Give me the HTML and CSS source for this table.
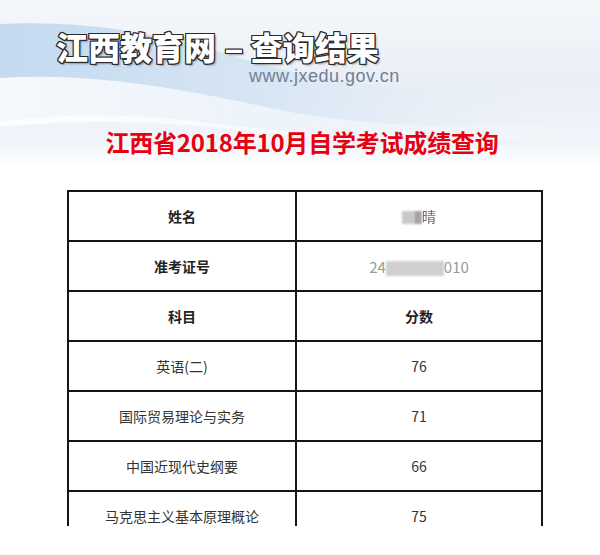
FILE: index.html
```html
<!DOCTYPE html>
<html lang="zh-CN">
<head>
<meta charset="utf-8">
<title>江西教育网 - 查询结果</title>
<link rel="stylesheet" href="styles.css">
</head>
<body>
<div class="page">
  <header class="banner">
    <svg class="banner-bg" width="600" height="180" viewBox="0 0 600 180" preserveAspectRatio="none" aria-hidden="true">
      <defs>
        <linearGradient id="sky" x1="0" y1="0" x2="0" y2="1">
          <stop offset="0" stop-color="#f5f7fa"/>
          <stop offset="0.45" stop-color="#eaeff6"/>
          <stop offset="0.8" stop-color="#f2f5fa"/>
          <stop offset="0.92" stop-color="#ffffff"/>
        </linearGradient>
        <linearGradient id="wave1" x1="0" y1="0" x2="1" y2="0">
          <stop offset="0" stop-color="#c3daf0"/>
          <stop offset="0.45" stop-color="#d8e6f4"/>
          <stop offset="1" stop-color="#eef2f8" stop-opacity="0"/>
        </linearGradient>
        <linearGradient id="wave2" x1="0" y1="0" x2="1" y2="0">
          <stop offset="0" stop-color="#ffffff" stop-opacity="0.85"/>
          <stop offset="0.6" stop-color="#ffffff" stop-opacity="0.45"/>
          <stop offset="1" stop-color="#ffffff" stop-opacity="0"/>
        </linearGradient>
      </defs>
      <rect width="600" height="180" fill="url(#sky)"/>
      <path d="M0 24 C80 20 160 32 240 58 C330 84 420 98 600 84 L600 150 C420 140 300 135 200 122 C120 112 60 114 0 122 Z" fill="url(#wave1)"/>
      <path d="M0 78 C90 72 180 88 270 108 C360 128 470 130 600 120 L600 136 C460 146 340 141 240 130 C150 120 70 120 0 127 Z" fill="url(#wave2)"/>
    </svg>
    <div class="brand">
      <div class="brand-name">江西教育网<span class="dash">–</span>查询结果</div>
      <div class="brand-url">www.jxedu.gov.cn</div>
    </div>
    <h1 class="exam-title">江西省2018年10月自学考试成绩查询</h1>
  </header>

  <div class="table-wrap">
    <table class="scores">
      <tr>
        <th>姓名</th>
        <td class="masked"><span class="blot w12"></span><span class="blot w10 dark"></span><span class="blur-char">晴</span></td>
      </tr>
      <tr>
        <th>准考证号</th>
        <td class="masked id">24<span class="blot w60"></span>010</td>
      </tr>
      <tr>
        <th>科目</th>
        <th>分数</th>
      </tr>
      <tr><td>英语(二)</td><td>76</td></tr>
      <tr><td>国际贸易理论与实务</td><td>71</td></tr>
      <tr><td>中国近现代史纲要</td><td>66</td></tr>
      <tr><td>马克思主义基本原理概论</td><td>75</td></tr>
    </table>
  </div>
</div>
</body>
</html>
```

FILE: styles.css
```css
* { box-sizing: border-box; }

html, body {
  margin: 0;
  padding: 0;
  background: #ffffff;
}

body {
  font-family: "Noto Sans CJK SC", "Microsoft YaHei", sans-serif;
  color: #333333;
}

.page {
  width: 600px;
  height: 555px;
  overflow: hidden;
}

.banner {
  position: relative;
  height: 178px;
  display: flex;
  flex-direction: column;
}

.banner-bg {
  position: absolute;
  left: 0;
  top: 0;
  width: 600px;
  height: 180px;
  z-index: 0;
}

.brand {
  position: relative;
  z-index: 1;
  padding: 28px 0 0 56px;
}

.brand-name {
  font-family: "Noto Sans CJK SC", sans-serif;
  font-weight: 900;
  font-size: 32px;
  line-height: 36px;
  letter-spacing: 0;
  color: #ffffff;
  -webkit-text-stroke: 2px #333333;
  paint-order: stroke fill;
  text-shadow:
    1px 1px 0 #2a2a2a,
    -1px 1px 0 #2a2a2a,
    1px -1px 0 #2a2a2a,
    -1px -1px 0 #2a2a2a,
    2px 2px 2px rgba(0,0,0,0.35);
}

.brand-name .dash {
  display: inline-block;
  margin: 0 8px 0 9px;
  font-family: "Liberation Sans", Arial, sans-serif;
  font-weight: 700;
}

.brand-url {
  margin: 0 0 0 193px;
  font-family: "Liberation Sans", Arial, sans-serif;
  font-size: 18px;
  line-height: 18px;
  color: #6f8097;
  letter-spacing: 0.5px;
}

.exam-title {
  position: relative;
  z-index: 1;
  margin: 42px 0 0 0;
  text-align: center;
  font-family: "Noto Sans CJK SC", sans-serif;
  font-weight: 700;
  font-size: 24px;
  line-height: 30px;
  color: #e8000f;
  padding-left: 4px;
  letter-spacing: -0.2px;
}

.table-wrap {
  margin: 12px 0 0 67px;
  width: 476px;
  height: 336px;
  overflow: hidden;
}

.scores {
  width: 476px;
  border-collapse: collapse;
  table-layout: fixed;
  font-size: 14px;
}

.scores th,
.scores td {
  border: 2px solid #161616;
  height: 50px;
  padding: 0;
  text-align: center;
  vertical-align: middle;
  color: #333333;
}

.scores th {
  font-weight: 700;
  color: #222222;
}

.scores tr > :first-child {
  width: 228px;
}

.masked {
  color: #8a8a8a;
}

.masked.id {
  font-size: 15px;
  color: #9a9a9a;
  letter-spacing: 0;
}

.blot {
  display: inline-block;
  height: 13px;
  vertical-align: -2px;
  background: #c4c4c4;
  filter: blur(0.8px);
}

.blot.w12 { width: 12px; background: #c8c8c8; }
.blot.w10 { width: 8px; }
.blot.dark { background: #a8a2a5; }
.blot.w60 { width: 58px; height: 15px; background: #cfcfcf; vertical-align: -3px; }

.blur-char {
  color: #6f6a6e;
  filter: blur(0.4px);
}
```
